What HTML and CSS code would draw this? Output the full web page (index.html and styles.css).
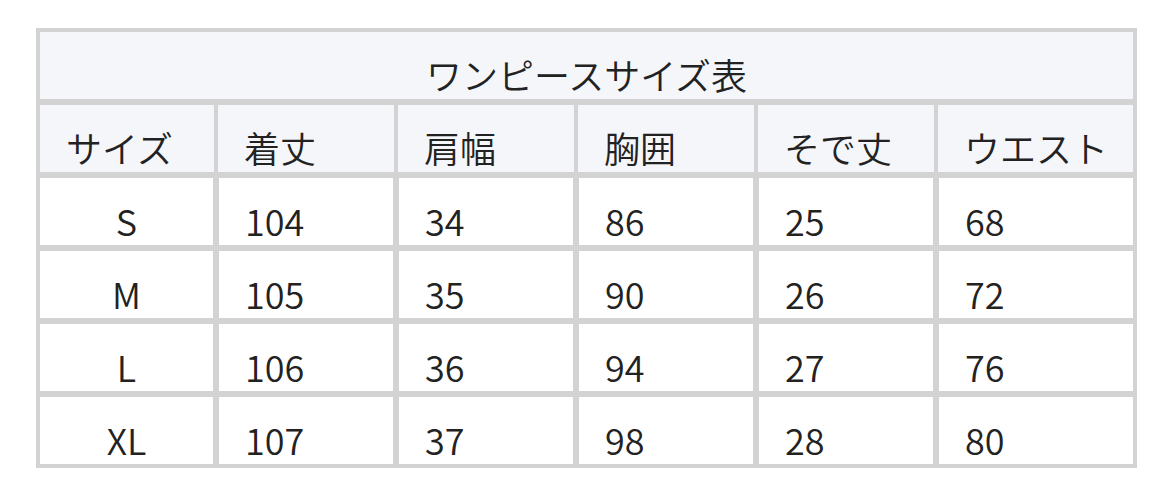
FILE: index.html
```html
<!DOCTYPE html>
<html lang="ja">
<head>
<meta charset="utf-8">
<title>ワンピースサイズ表</title>
<link rel="stylesheet" href="styles.css">
</head>
<body>
<table class="size-table">
  <colgroup>
    <col class="c-size">
    <col class="c-std">
    <col class="c-std">
    <col class="c-std">
    <col class="c-std">
    <col class="c-last">
  </colgroup>
  <thead>
    <tr class="title-row"><th colspan="6">ワンピースサイズ表</th></tr>
    <tr class="head-row">
      <th>サイズ</th>
      <th>着丈</th>
      <th>肩幅</th>
      <th>胸囲</th>
      <th>そで丈</th>
      <th>ウエスト</th>
    </tr>
  </thead>
  <tbody>
    <tr><td class="center">S</td><td>104</td><td>34</td><td>86</td><td>25</td><td>68</td></tr>
    <tr><td class="center">M</td><td>105</td><td>35</td><td>90</td><td>26</td><td>72</td></tr>
    <tr><td class="center">L</td><td>106</td><td>36</td><td>94</td><td>27</td><td>76</td></tr>
    <tr><td class="center">XL</td><td>107</td><td>37</td><td>98</td><td>28</td><td>80</td></tr>
  </tbody>
</table>
</body>
</html>
```

FILE: styles.css
```css
html, body {
  margin: 0;
  padding: 0;
  background: #ffffff;
}

body {
  padding: 28px 0 0 36px;
  font-family: "Noto Sans CJK JP", "Noto Sans", sans-serif;
  color: #222222;
}

.size-table {
  border-collapse: separate;
  border-spacing: 0;
  border: 1px solid #d3d3d3;
  table-layout: fixed;
  width: 1101px;
}

.c-size { width: 179px; }
.c-std { width: 180px; }
.c-last { width: 200px; }

.size-table th,
.size-table td {
  box-sizing: border-box;
  height: 73px;
  border: 3px solid #d3d3d3;
  padding: 25px 10px 8px 26px;
  font-size: 36px;
  line-height: 34px;
  font-weight: 350;
  text-align: left;
  vertical-align: top;
  white-space: nowrap;
}

.size-table th {
  background: #f5f6fa;
}

.head-row th {
  border-left-width: 2px;
  border-right-width: 2px;
}

.head-row th:first-child { border-left-width: 3px; }
.head-row th:last-child { border-right-width: 3px; }

.title-row th {
  text-align: center;
  padding-left: 0;
  padding-right: 0;
}

.size-table .center {
  text-align: center;
  padding-left: 0;
  padding-right: 0;
}
```
